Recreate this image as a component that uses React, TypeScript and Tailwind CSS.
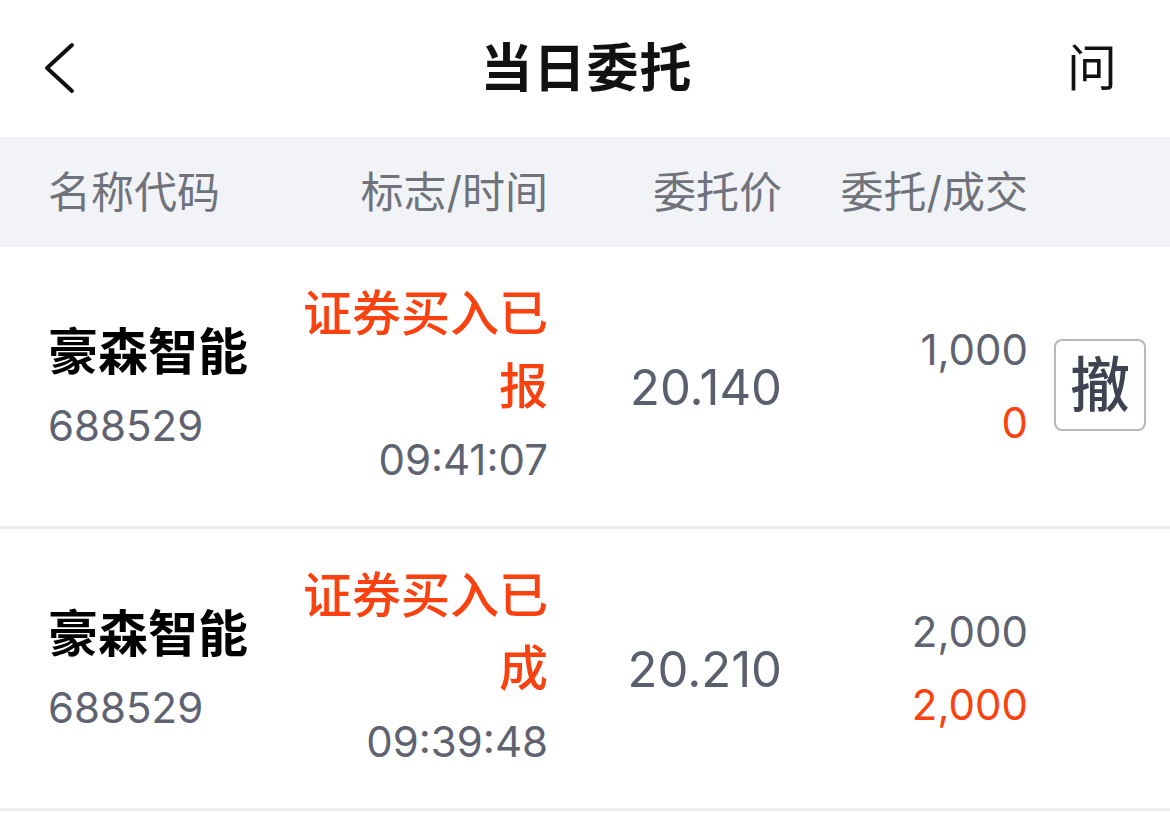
const ROWS = [
  { name: "豪森智能", code: "688529", status: ["证券买入已", "报"], time: "09:41:07", price: "20.140", qty: "1,000", done: "0", cancel: true },
  { name: "豪森智能", code: "688529", status: ["证券买入已", "成"], time: "09:39:48", price: "20.210", qty: "2,000", done: "2,000", cancel: false },
];

const font = "font-['Inter','Noto_Sans_CJK_SC',sans-serif]";

export default function App() {
  return (
    <div className={`w-[1170px] h-[813px] bg-white overflow-hidden ${font}`}>
      {/* nav bar */}
      <div className="h-[137px] flex items-center justify-between pl-[42px] pr-[53px]">
        <svg width="34" height="52" viewBox="0 0 34 52" className="mt-[-2px]">
          <path d="M30 3 L5 26 L30 49" fill="none" stroke="#111" strokeWidth="4" strokeLinecap="round" strokeLinejoin="round" />
        </svg>
        <div className="text-[52px] font-bold text-[#111] tracking-[1px] ml-[30px]">当日委托</div>
        <div className="text-[50px] text-[#111]">问</div>
      </div>

      {/* column header */}
      <div className="h-[110px] bg-[#f2f3f6] grid grid-cols-[252px_248px_234px_246px_1fr] items-center pl-[48px] text-[43px] text-[#70737c]">
        <div>名称代码</div>
        <div className="text-right">标志/时间</div>
        <div className="text-right">委托价</div>
        <div className="text-right">委托/成交</div>
        <div />
      </div>

      {ROWS.map((r, i) => (
        <div key={i}>
          <div className="h-[279px] grid grid-cols-[252px_248px_234px_246px_1fr] items-center pl-[48px]">
            <div className="flex flex-col mt-[5px]">
              <div className="text-[50px] font-bold text-black leading-[74px]">{r.name}</div>
              <div className="text-[42px] text-[#5f6371] leading-[74px]">{r.code}</div>
            </div>
            <div className="flex flex-col items-end leading-[73px] whitespace-nowrap">
              {r.status.map((s, k) => (
                <div key={k} className="text-[49px] text-[#f9420f] font-medium">{s}</div>
              ))}
              <div className="text-[42px] text-[#5f6371]">{r.time}</div>
            </div>
            <div className="text-right text-[49px] text-[#5a5f6d] mt-[2px]">{r.price}</div>
            <div className="flex flex-col items-end text-[42px] leading-[73px] mt-[-2px]">
              <div className="text-[#5f6371]">{r.qty}</div>
              <div className="text-[#f9420f]">{r.done}</div>
            </div>
            <div className="pl-[26px] mt-[-3px]">
              {r.cancel && (
                <div className="w-[92px] h-[92px] border-2 border-[#b4b7bd] rounded-[8px] flex items-center justify-center text-[60px] text-[#3e4352] font-medium">
                  撤
                </div>
              )}
            </div>
          </div>
          <div className="h-[3px] bg-[#ebecef]" />
        </div>
      ))}
    </div>
  );
}
